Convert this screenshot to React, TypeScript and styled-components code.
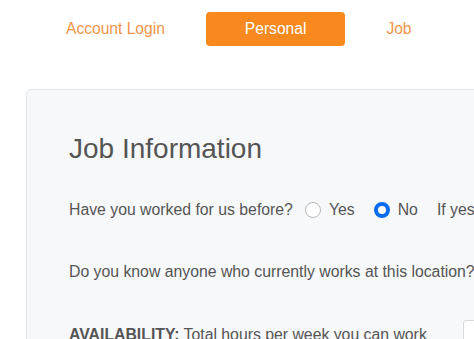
import React from "react";
import styled, { createGlobalStyle } from "styled-components";

const GlobalStyle = createGlobalStyle`
  html, body {
    margin: 0;
    padding: 0;
    background: #ffffff;
    overflow: hidden;
  }
  body {
    font-family: "Liberation Sans", Arial, sans-serif;
    color: #555555;
  }
`;

const Page = styled.div`
  width: 474px;
  height: 339px;
  overflow: hidden;
`;

const Tabs = styled.nav`
  display: flex;
  gap: 2px;
  padding: 12px 0 0 27px;
`;

const Tab = styled.button<{ $active?: boolean }>`
  height: 34px;
  padding: 0 39px;
  border: none;
  border-radius: 4px;
  font-family: inherit;
  font-size: 15.6px;
  white-space: nowrap;
  cursor: pointer;
  background: ${(p) => (p.$active ? "#f7891f" : "transparent")};
  color: ${(p) => (p.$active ? "#ffffff" : "#f2944a")};
`;

const Card = styled.section`
  margin: 43px 0 0 26px;
  width: 600px;
  min-height: 300px;
  padding: 43px 0 0 42px;
  background: #f7f8fa;
  border: 1px solid #e4e5e7;
  border-radius: 5px;
  box-sizing: border-box;
`;

const Title = styled.h2`
  margin: 0;
  font-size: 28px;
  line-height: 32px;
  font-weight: 400;
  color: #555555;
`;

const Row = styled.div<{ $gap: number }>`
  display: flex;
  align-items: center;
  min-height: 20px;
  margin-top: ${(p) => p.$gap}px;
  font-size: 15.8px;
  line-height: 20px;
  white-space: nowrap;
`;

const Option = styled.label`
  display: flex;
  align-items: center;
  gap: 8px;
  margin-left: 12px;
  & + & {
    margin-left: 19px;
  }
`;

const Radio = styled.input.attrs({ type: "radio" })`
  appearance: none;
  width: 16px;
  height: 16px;
  margin: 0;
  border-radius: 50%;
  border: 1px solid #b8b8b8;
  background: #ffffff;
  box-sizing: border-box;
  &:checked {
    border: 4.5px solid #0b6cf0;
  }
`;

const Hint = styled.span`
  margin-left: 19px;
`;

const Strong = styled.strong`
  font-weight: 700;
  margin-right: 4px;
`;

const HoursInput = styled.input`
  width: 80px;
  height: 30px;
  margin-left: 36px;
  border: 1px solid #d9d9d9;
  border-radius: 3px;
  background: #ffffff;
  box-sizing: border-box;
`;

export default function App() {
  return (
    <Page>
      <GlobalStyle />
      <Tabs>
        <Tab>Account Login</Tab>
        <Tab $active>Personal</Tab>
        <Tab>Job</Tab>
      </Tabs>
      <Card>
        <Title>Job Information</Title>
        <Row $gap={35}>
          Have you worked for us before?
          <Option>
            <Radio name="before" />
            Yes
          </Option>
          <Option>
            <Radio name="before" defaultChecked />
            No
          </Option>
          <Hint>If yes, when?</Hint>
        </Row>
        <Row $gap={42}>Do you know anyone who currently works at this location?</Row>
        <Row $gap={38}>
          <Strong>AVAILABILITY:</Strong>
          Total hours per week you can work
          <HoursInput />
        </Row>
      </Card>
    </Page>
  );
}
